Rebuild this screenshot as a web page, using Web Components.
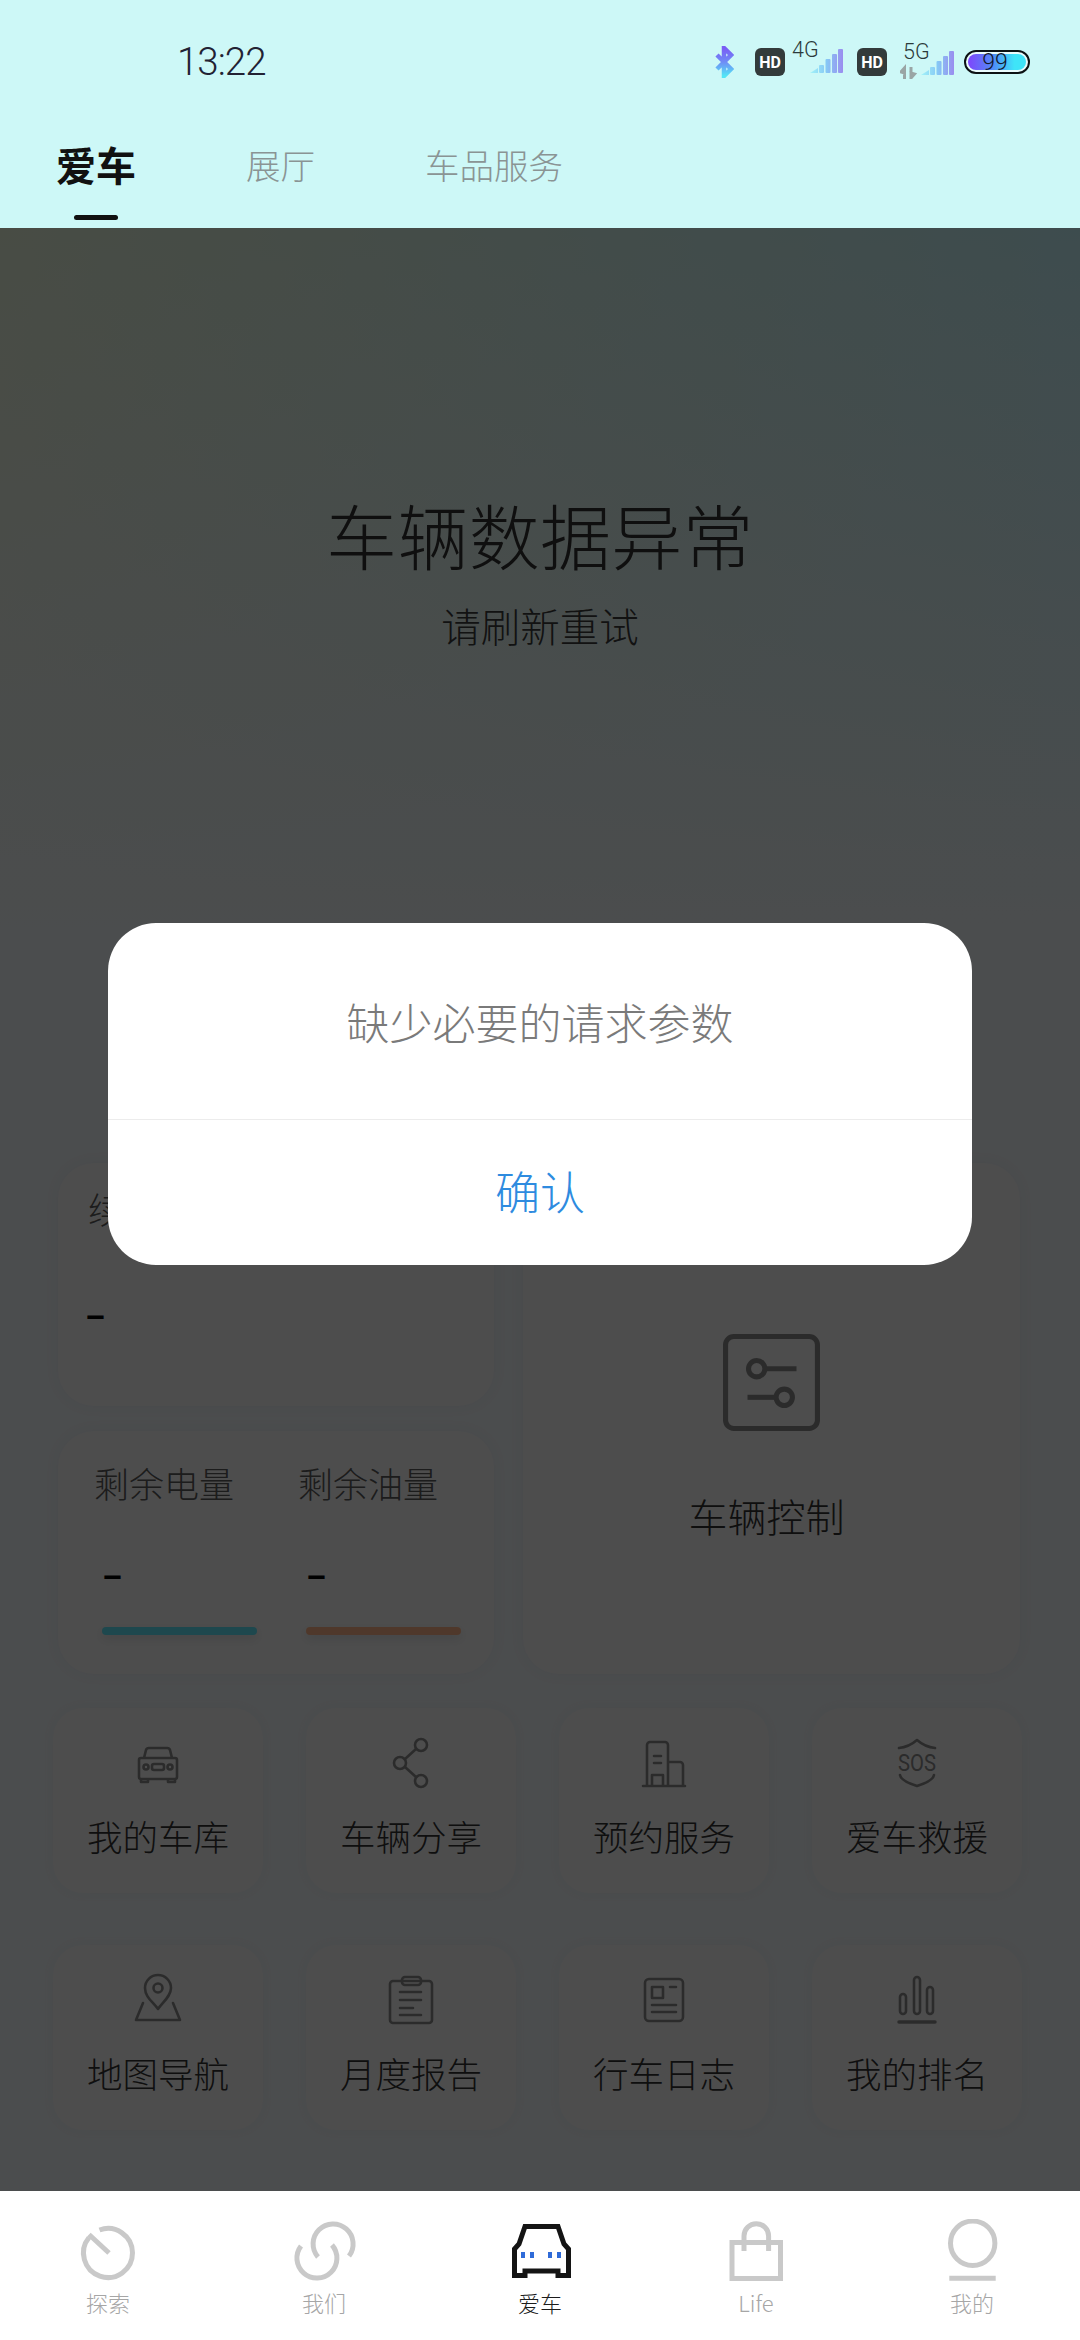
<!DOCTYPE html>
<html lang="zh-CN">
<head>
<meta charset="utf-8">
<title>爱车</title>
<style>
  html, body { margin: 0; padding: 0; }
  body {
    width: 1080px;
    font-family: "Noto Sans CJK SC", "Noto Sans", sans-serif;
    font-weight: 300;
  }
</style>
</head>
<body>
<app-screen>
  <status-bar slot="top"></status-bar>
  <top-tabs slot="top"></top-tabs>
  <car-dashboard></car-dashboard>
  <alert-dialog slot="overlay" message="缺少必要的请求参数" action="确认"></alert-dialog>
  <bottom-nav slot="bottom"></bottom-nav>
</app-screen>

<script>
const ICON_STROKE = '#8c8c8c';

/**
 * Page frame: header, dimmed content with the dialog on top, bottom bar.
 */
class AppScreen extends HTMLElement {
  constructor() {
    super();
    this.attachShadow({ mode: 'open' });
    this.shadowRoot.innerHTML = `
      <style>
        :host { display: flex; flex-direction: column; width: 1080px; height: 2340px; overflow: hidden; }
        header { flex: 0 0 228px; background: #cdf8f7; }
        main { flex: 1 1 auto; position: relative; overflow: hidden; }
        .scrim { position: absolute; inset: 0; background: rgba(0, 0, 0, .69); padding-top: 695px; display: flex; justify-content: center; align-items: flex-start; }
        footer { flex: 0 0 149px; background: #fff; }
      </style>
      <header><slot name="top"></slot></header>
      <main>
        <slot></slot>
        <div class="scrim"><slot name="overlay"></slot></div>
      </main>
      <footer><slot name="bottom"></slot></footer>
    `;
  }
}
customElements.define('app-screen', AppScreen);

/**
 * Network label with its signal bars, as one small svg.
 */
class SignalGroup extends HTMLElement {
  connectedCallback() {
    const label = this.getAttribute('label');
    const id = `sig${label}`;
    const is5g = label === '5G';
    const dx = is5g ? 3 : 0;
    const width = is5g ? 54 : 51;
    const arrows = is5g
      ? '<path d="M4.500 38V28M1 31l3.500-4v5zM11 26v10M14.500 33l-3.500 4v-5z" fill="#9aa5a5" stroke="#9aa5a5" stroke-width="3"/>'
      : '';
    this.attachShadow({ mode: 'open' }).innerHTML = `
      <style>
        :host { display: block; width: ${width}px; height: 46px; }
        svg { display: block; }
      </style>
      <svg width="${width}" height="46" viewBox="0 -8 ${width} 46">
        <defs>
          <linearGradient id="${id}" gradientUnits="userSpaceOnUse" x1="18" y1="0" x2="51" y2="0">
            <stop offset="0" stop-color="#a3f3f8"/>
            <stop offset=".5" stop-color="#86c8f5"/>
            <stop offset="1" stop-color="#9a8def"/>
          </linearGradient>
        </defs>
        <text x="${dx}" y="18" font-family="Roboto" font-weight="300" font-size="21.500" fill="#2c3a3a">${label}</text>
        <g fill="url(#${id})" transform="translate(${dx} 0)">
          <path d="M18 34l8-5v5z"/>
          <rect x="27" y="26" width="5" height="8" rx="1"/>
          <rect x="33.500" y="20" width="5" height="14" rx="1"/>
          <rect x="40" y="15" width="5" height="19" rx="1"/>
          <rect x="46" y="10" width="5" height="24" rx="1"/>
        </g>
        ${arrows}
      </svg>
    `;
  }
}
customElements.define('signal-group', SignalGroup);

class StatusBar extends HTMLElement {
  constructor() {
    super();
    const hd = `<svg width="30" height="28" viewBox="0 0 30 28"><rect width="30" height="28" rx="6" fill="#333b3b"/><text x="15" y="20" text-anchor="middle" font-family="Roboto" font-weight="700" font-size="16" fill="#fff">HD</text></svg>`;
    this.attachShadow({ mode: 'open' }).innerHTML = `
      <style>
        :host { display: flex; align-items: center; height: 124px; padding: 0 50px 0 177px; box-sizing: border-box; }
        .time { font: 300 38.500px/1 Roboto, sans-serif; color: #223; letter-spacing: -1px; flex: 1; }
        .icons { display: flex; align-items: center; }
        svg { display: block; }
      </style>
      <span class="time">13:22</span>
      <div class="icons">
        <svg width="20" height="32" viewBox="0 0 20 32" style="margin-right:21px">
          <defs><linearGradient id="bt" x1="0" y1="0" x2="0" y2="1"><stop offset="0" stop-color="#7a5cf5"/><stop offset=".5" stop-color="#6f8cf6"/><stop offset="1" stop-color="#54e6f6"/></linearGradient></defs>
          <path d="M3 9l14 14-7 7V2l7 7L3 23" fill="none" stroke="url(#bt)" stroke-width="4.500"/>
        </svg>
        ${hd}
        <signal-group label="4G" style="margin:-16px 14px 0 7px"></signal-group>
        ${hd}
        <signal-group label="5G" style="margin:-12px 10px 0 13px"></signal-group>
        <svg width="66" height="32" viewBox="0 0 66 32">
          <defs><linearGradient id="bat" x1="0" y1="0" x2="1" y2="0"><stop offset="0" stop-color="#7f45fb"/><stop offset=".45" stop-color="#4f90f8"/><stop offset=".8" stop-color="#3fe4f8"/></linearGradient></defs>
          <rect x="1" y="5" width="64" height="22" rx="11" fill="#e9fbfc" stroke="#0c1214" stroke-width="2"/>
          <rect x="4" y="8" width="58" height="16" rx="8" fill="url(#bat)"/>
          <text x="31" y="24" text-anchor="middle" font-family="Roboto" font-weight="300" font-size="23" fill="#14182a">99</text>
        </svg>
      </div>
    `;
  }
}
customElements.define('status-bar', StatusBar);

class TopTabs extends HTMLElement {
  constructor() {
    super();
    this.attachShadow({ mode: 'open' }).innerHTML = `
      <style>
        :host { display: flex; align-items: flex-start; height: 104px; padding-left: 56px; box-sizing: border-box; }
        .tab { font-size: 34.500px; line-height: 80px; color: #8a9494; margin-right: 110px; position: relative; }
        .active { font-size: 40px; font-weight: 700; color: #111; margin-right: 110px; }
        .active::after { content: ""; position: absolute; left: 18px; top: 91px; width: 44px; height: 5px; border-radius: 3px; background: #111; }
      </style>
      <span class="tab active">爱车</span>
      <span class="tab">展厅</span>
      <span class="tab">车品服务</span>
    `;
  }
}
customElements.define('top-tabs', TopTabs);

/**
 * White panel with a soft shadow, dimmed along with the page.
 */
class PanelCard extends HTMLElement {
  constructor() {
    super();
    this.attachShadow({ mode: 'open' }).innerHTML = `
      <style>
        :host { display: block; box-sizing: border-box; background: #f8f8f8; border-radius: 36px; box-shadow: 0 0 14px rgba(120, 130, 140, .07); }
      </style>
      <slot></slot>
    `;
  }
}
customElements.define('panel-card', PanelCard);

class EnergyGauge extends HTMLElement {
  connectedCallback() {
    this.attachShadow({ mode: 'open' }).innerHTML = `
      <style>
        :host { display: flex; flex-direction: column; }
        .label { font-size: 35px; line-height: 50px; color: #5a5a5a; margin-top: -3px; }
        .value { font: 700 32px/40px Roboto, sans-serif; color: #000; margin: 49px 0 0 8px; }
        .bar { width: 155px; height: 8px; border-radius: 4px; margin: 30px 0 0 8px; background: ${this.getAttribute('color')}; box-shadow: 0 4px 10px rgba(120, 130, 140, .2); }
      </style>
      <span class="label">${this.getAttribute('label')}</span>
      <span class="value">–</span>
      <div class="bar"></div>
    `;
  }
}
customElements.define('energy-gauge', EnergyGauge);

class QuickAction extends HTMLElement {
  constructor() {
    super();
    this.attachShadow({ mode: 'open' }).innerHTML = `
      <style>
        :host { display: flex; flex-direction: column; align-items: center; box-sizing: border-box; height: 185px; padding-top: 25px; background: #f8f8f8; border-radius: 30px; box-shadow: 0 0 12px rgba(120, 130, 140, .06); }
        .icon { height: 60px; }
        .text { font-size: 35.500px; line-height: 50px; margin-top: 18px; color: #333; }
      </style>
      <div class="icon"><slot name="icon"></slot></div>
      <div class="text"><slot></slot></div>
    `;
  }
}
customElements.define('quick-action', QuickAction);

class CarDashboard extends HTMLElement {
  constructor() {
    super();
    const svg = (body) => `<svg slot="icon" width="60" height="60" viewBox="0 0 60 60" fill="none" stroke="${ICON_STROKE}" stroke-width="2.600" stroke-linejoin="round" stroke-linecap="round" style="display:block">${body}</svg>`;
    const actions = [
      ['我的车库', '<path d="M16 25l2-8a3 3 0 0 1 3-2h18a3 3 0 0 1 3 2l2 8M13 25h34a2 2 0 0 1 2 2v17a2 2 0 0 1-2 2H13a2 2 0 0 1-2-2V27a2 2 0 0 1 2-2zM13 46v3h7v-3M40 46v3h7v-3"/><circle cx="18" cy="34" r="2.500"/><circle cx="42" cy="34" r="2.500"/><rect x="24" y="31" width="12" height="6" rx="2"/>'],
      ['车辆分享', '<circle cx="40" cy="12" r="6"/><circle cx="19" cy="30" r="6"/><circle cx="40" cy="48" r="6"/><path d="M24 26l11-10M24 34l11 10"/>'],
      ['预约服务', '<path d="M9 53h42M13 53V12a3 3 0 0 1 3-3h15a3 3 0 0 1 3 3v41M34 29h12a3 3 0 0 1 3 3v21M20 23h7M20 30h7M18 53V42h11v11"/>'],
      ['爱车救援', '<path d="M12 15Q22 14 30 7Q38 14 48 15M13 42Q14 48 30 53Q46 48 47 42"/><text x="30" y="37.500" text-anchor="middle" font-family="Roboto" font-weight="400" font-size="24" fill="#8c8c8c" stroke="none" textLength="38" lengthAdjust="spacingAndGlyphs">SOS</text>'],
      ['地图导航', '<path d="M30 39c-5-7-13-12-13-21a13 13 0 0 1 26 0c0 8-8 14-13 21zM15 33L8 50H52L45 33"/><circle cx="30" cy="18" r="4.500"/>'],
      ['月度报告', '<rect x="9" y="11" width="42" height="42" rx="3"/><rect x="21" y="7" width="19" height="8" rx="3"/><path d="M19 24h21M19 32h21M19 40h13M19 47h21" transform="translate(0 -2)"/>'],
      ['行车日志', '<rect x="11" y="9" width="38" height="42" rx="4"/><rect x="18" y="17" width="11" height="11"/><path d="M36 17h6M18 35h24M18 42h24"/>'],
      ['我的排名', '<rect x="13" y="24" width="6" height="20" rx="3"/><rect x="27" y="7" width="6" height="37" rx="3"/><rect x="40" y="17" width="6" height="27" rx="3"/><path d="M12 52h36" stroke-width="3.500"/>'],
    ];
    this.attachShadow({ mode: 'open' }).innerHTML = `
      <style>
        :host { display: flex; flex-direction: column; height: 100%; box-sizing: border-box; padding-top: 260px;
          background:
            linear-gradient(to bottom, rgba(241, 247, 250, 0) 0, #f1f7fa 700px),
            linear-gradient(90deg, #e8f5dc, #c6f6fb); }
        .hero { display: flex; flex-direction: column; align-items: center; height: 675px; }
        h1 { margin: 0; font-size: 71px; line-height: 90px; font-weight: 300; color: #333; letter-spacing: .3px; }
        p { margin: 22px 0 0; font-size: 39.500px; line-height: 50px; color: #3c3c3c; }
        .summary { display: grid; grid-template-columns: 436px 497px; gap: 25px 29px; margin-left: 58px; }
        .range { height: 243px; padding: 20px 0 0 30px; }
        .range .label { font-size: 36px; line-height: 50px; color: #5a5a5a; }
        .range .value { font: 700 32px/40px Roboto, sans-serif; color: #000; margin: 64px 0 0 -3px; }
        .energy { height: 243px; padding: 30px 0 0 36px; display: grid; grid-template-columns: 204px 204px; }
        .control { grid-column: 2; grid-row: 1 / span 2; display: flex; flex-direction: column; align-items: center; padding-top: 171px; }
        .control span { font-size: 39px; line-height: 56px; color: #333; margin: 56px 10px 0 0; }
        .actions { display: grid; grid-template-columns: repeat(4, 210px); gap: 52px 43px; margin: 34px 0 0 53px; }
      </style>
      <div class="hero">
        <h1>车辆数据异常</h1>
        <p>请刷新重试</p>
      </div>
      <div class="summary">
        <panel-card class="range">
          <div class="label">续航里程</div>
          <div class="value">–</div>
        </panel-card>
        <panel-card class="energy">
          <energy-gauge label="剩余电量" color="#61e7fa"></energy-gauge>
          <energy-gauge label="剩余油量" color="#ffb68a"></energy-gauge>
        </panel-card>
        <panel-card class="control">
          <svg width="97" height="97" viewBox="0 0 95 95" fill="none" stroke="${ICON_STROKE}" stroke-width="5" style="display:block">
            <rect x="2.500" y="2.500" width="90" height="90" rx="8"/>
            <circle cx="33" cy="34" r="8"/><path d="M41 34h31"/>
            <circle cx="60" cy="62" r="8"/><path d="M24 62h28"/>
          </svg>
          <span>车辆控制</span>
        </panel-card>
      </div>
      <div class="actions">
        ${actions.map(([label, icon]) => `<quick-action>${svg(icon)}${label}</quick-action>`).join('')}
      </div>
    `;
  }
}
customElements.define('car-dashboard', CarDashboard);

class AlertDialog extends HTMLElement {
  connectedCallback() {
    this.attachShadow({ mode: 'open' }).innerHTML = `
      <style>
        :host { display: flex; flex-direction: column; width: 864px; height: 342px; background: #fff; border-radius: 48px; overflow: hidden; }
        .message { flex: 0 0 197px; display: flex; align-items: center; justify-content: center; font-size: 43px; color: #7a7a7a; border-bottom: 1px solid #ececec; box-sizing: border-box; }
        .action { flex: 1; display: flex; align-items: center; justify-content: center; font-size: 45px; color: #2e8bdf; padding-bottom: 4px; }
      </style>
      <div class="message">${this.getAttribute('message')}</div>
      <div class="action">${this.getAttribute('action')}</div>
    `;
  }
}
customElements.define('alert-dialog', AlertDialog);

class NavItem extends HTMLElement {
  constructor() {
    super();
    this.attachShadow({ mode: 'open' }).innerHTML = `
      <style>
        :host { display: flex; flex-direction: column; align-items: center; padding-top: 28px; color: #a6a6a6; }
        :host([active]) { color: #1c1c1c; }
        .text { font-size: 22px; line-height: 30px; margin-top: -2px; }
      </style>
      <slot name="icon"></slot>
      <div class="text"><slot></slot></div>
    `;
  }
}
customElements.define('nav-item', NavItem);

class BottomNav extends HTMLElement {
  constructor() {
    super();
    const icon = (body, stroke = '#c9c9c9') => `<svg slot="icon" width="72" height="70" viewBox="0 0 72 70" fill="none" stroke="${stroke}" stroke-width="5" style="display:block">${body}</svg>`;
    this.attachShadow({ mode: 'open' }).innerHTML = `
      <style>
        :host { display: grid; grid-template-columns: repeat(5, 216px); height: 149px; }
      </style>
      <nav-item>${icon('<path d="M27.500 11A24.500 24.500 0 1 1 17 18.500"/><path d="M17 15.500L37 34"/>')}探索</nav-item>
      <nav-item>${icon('<path d="M30 38A20 20 0 1 1 61 37"/><path d="M13 27A20 20 0 1 0 44 26"/>')}我们</nav-item>
      <nav-item active>${icon('<path d="M21 7.500H54L60 25L64.500 30V56.500H54V52H21V56.500H10.500V30L15 25Z" stroke-linejoin="miter"/><g fill="#2f6bd8" stroke="none"><rect x="17" y="33" width="4" height="6"/><rect x="26" y="33" width="4" height="6"/><rect x="44" y="33" width="4" height="6"/><rect x="53" y="33" width="4" height="6"/></g>', '#141414')}爱车</nav-item>
      <nav-item>${icon('<rect x="12" y="23.500" width="48.500" height="36"/><path d="M24 32V17a12.300 12.300 0 0 1 24.600 0V32"/>')}Life</nav-item>
      <nav-item>${icon('<circle cx="36.700" cy="24.300" r="22.200"/><path d="M13.300 59.300H59.700"/>')}我的</nav-item>
    `;
  }
}
customElements.define('bottom-nav', BottomNav);
</script>
</body>
</html>
